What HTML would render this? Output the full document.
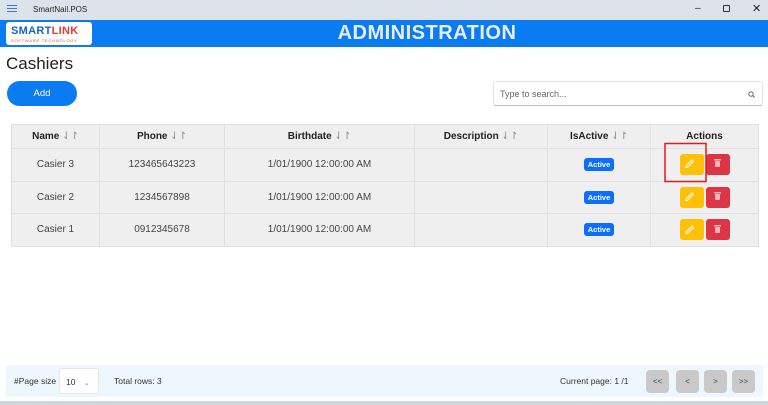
<!DOCTYPE html>
<html><head><style>
*{box-sizing:border-box;margin:0;padding:0}
body{width:768px;height:405px;position:relative;background:#fff;font-family:"Liberation Sans",sans-serif;overflow:hidden;color:#212529}
.abs{position:absolute}
.tb{left:0;top:0;width:768px;height:20px;background:#dce3ea;font-size:8px;color:#222}
.hdr{left:0;top:20px;width:768px;height:27px;background:#0a7bf1;color:#e8eef6;font-weight:bold;font-size:20px;text-align:center;line-height:27px;letter-spacing:0.5px;padding-left:86px}
.logo{left:6px;top:22px;width:86px;height:23px;background:#fff;border-radius:3px}
table{position:absolute;left:11px;top:124px;width:748px;border-collapse:collapse;font-size:10px}
td,th{border:1px solid #dee2e6;text-align:center;background:#efefef}
th{height:24px;font-weight:bold;font-size:10px;color:#222}
th span{color:#888;font-weight:normal}
td{height:32.5px;color:#444}
.badge{display:inline-block;background:#0d6efd;color:#fff;font-size:7.5px;font-weight:bold;padding:2px 4px;border-radius:3px}
.btn{display:inline-block;width:24px;height:21px;border-radius:3px;vertical-align:middle;margin:0 1px;position:relative}
.y{background:#ffc107}.r{background:#dc3545}
.ft{left:6px;top:365px;width:757px;height:32px;background:#eef6fe;font-size:8.5px;color:#333;white-space:nowrap}
.pb{position:absolute;top:5px;width:23px;height:23px;background:#c9c9c9;border-radius:4px;font-size:8px;text-align:center;line-height:23px;color:#444}
</style></head><body>
<div class="abs tb">
 <div class="abs" style="left:7px;top:5px;width:10px;height:1.3px;background:#3a7bd5;box-shadow:0 3px 0 #3a7bd5,0 6px 0 #3a7bd5"></div>
 <div class="abs" style="left:33px;top:5px">SmartNail.POS</div>
 <div class="abs" style="left:695px;top:3px;font-size:10px">–</div>
 <div class="abs" style="left:723px;top:5px;width:7px;height:7px;border:1.3px solid #333;border-radius:1px"></div>
 <div class="abs" style="left:752px;top:2px;font-size:11px">✕</div>
</div>
<div class="abs hdr">ADMINISTRATION</div>
<div class="abs logo">
 <div class="abs" style="left:5px;top:3px;font-size:11px;font-weight:bold;color:#1565c0;letter-spacing:0.3px">SMART<span style="color:#e53935">LINK</span></div>
 <div class="abs" style="left:5px;top:16px;font-size:4px;color:#e53935;letter-spacing:0.8px">SOFTWARE TECHNOLOGY</div>
</div>
<div class="abs" style="left:6px;top:54px;font-size:17px;color:#222">Cashiers</div>
<div class="abs" style="left:7px;top:81px;width:70px;height:25px;background:#0a7bf1;border-radius:13px;color:#fff;font-size:9.5px;text-align:center;line-height:25px">Add</div>
<div class="abs" style="left:493px;top:81px;width:270px;height:25px;border:1px solid #e2e2e2;border-bottom:1px solid #bbb;border-radius:3px;font-size:9px;color:#666;line-height:24px;padding-left:6px">Type to search...
 <svg class="abs" style="right:7px;top:9px" width="7" height="7" viewBox="0 0 7 7"><circle cx="3" cy="3" r="2.2" fill="none" stroke="#666" stroke-width="1"/><path d="M4.6 4.6L6.5 6.5" stroke="#666"/></svg></div>
<table>
<tr><th style="width:88px">Name <span>⇃↾</span></th><th style="width:125px">Phone <span>⇃↾</span></th><th style="width:190px">Birthdate <span>⇃↾</span></th><th style="width:133px">Description <span>⇃↾</span></th><th style="width:103px">IsActive <span>⇃↾</span></th><th>Actions</th></tr>
<tr><td>Casier 3</td><td>123465643223</td><td>1/01/1900 12:00:00 AM</td><td></td><td><span class="badge">Active</span></td><td><span class="btn y"></span><span class="btn r"></span></td></tr>
<tr><td>Casier 2</td><td>1234567898</td><td>1/01/1900 12:00:00 AM</td><td></td><td><span class="badge">Active</span></td><td><span class="btn y"></span><span class="btn r"></span></td></tr>
<tr><td>Casier 1</td><td>0912345678</td><td>1/01/1900 12:00:00 AM</td><td></td><td><span class="badge">Active</span></td><td><span class="btn y"></span><span class="btn r"></span></td></tr>
</table>
<svg class="abs" style="left:0;top:0" width="768" height="405">
 <g fill="none" stroke="#fff" stroke-width="1">
  <path d="M686 166l6-6 1.5 1.5-6 6h-1.5z"/><path d="M686 199l6-6 1.5 1.5-6 6h-1.5z"/><path d="M686 232l6-6 1.5 1.5-6 6h-1.5z"/>
 </g>
 <g fill="#f4b6bc">
  <rect x="714" y="159" width="7" height="1.5"/><rect x="715" y="161" width="5" height="6" rx="1"/>
  <rect x="714" y="192" width="7" height="1.5"/><rect x="715" y="194" width="5" height="6" rx="1"/>
  <rect x="714" y="225" width="7" height="1.5"/><rect x="715" y="227" width="5" height="6" rx="1"/>
 </g>
 <rect x="665" y="143.5" width="41" height="38" fill="none" stroke="#e01b1b" stroke-width="1.5"/>
</svg>
<div class="abs ft">
 <div class="abs" style="left:8px;top:11px">#Page size</div>
 <div class="abs" style="left:53px;top:3px;width:40px;height:26px;background:#fff;border:1px solid #e3e8ee;border-radius:3px;padding:8px 0 0 6px">10 <span style="font-size:7px;color:#888;margin-left:6px">⌄</span></div>
 <div class="abs" style="left:108px;top:11px">Total rows: 3</div>
 <div class="abs" style="left:554px;top:11px">Current page: 1 /1</div>
 <div class="pb" style="left:640px">&lt;&lt;</div>
 <div class="pb" style="left:670px">&lt;</div>
 <div class="pb" style="left:698px">&gt;</div>
 <div class="pb" style="left:726px">&gt;&gt;</div>
</div>
<div class="abs" style="left:0;top:401px;width:768px;height:4px;background:#cfd6dc"></div>
</body></html>
